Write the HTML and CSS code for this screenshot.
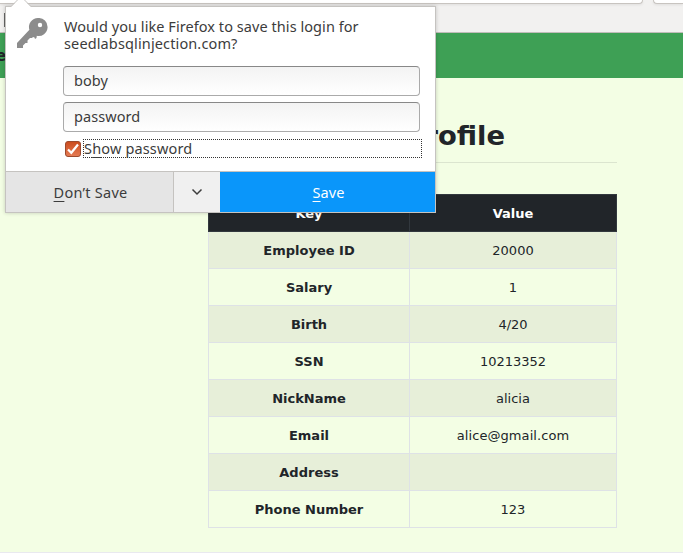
FILE: index.html
```html
<!DOCTYPE html>
<html lang="en">
<head>
<meta charset="utf-8">
<title>Alice Profile</title>
<link rel="stylesheet" href="styles.css">
</head>
<body>
<div class="toolbar"><div class="field field-main"></div><div class="field field-side"></div><i class="edge"></i></div>
<nav class="navbar"><span class="nav-text">e</span></nav>
<main class="profile">
  <h1>Alice Profile</h1>
  <hr>
  <table>
    <thead><tr><th>Key</th><th>Value</th></tr></thead>
    <tbody>
      <tr><th>Employee ID</th><td>20000</td></tr>
      <tr><th>Salary</th><td>1</td></tr>
      <tr><th>Birth</th><td>4/20</td></tr>
      <tr><th>SSN</th><td>10213352</td></tr>
      <tr><th>NickName</th><td>alicia</td></tr>
      <tr><th>Email</th><td class="email">alice@gmail.com</td></tr>
      <tr><th>Address</th><td></td></tr>
      <tr><th>Phone Number</th><td>123</td></tr>
    </tbody>
  </table>
</main>
<footer></footer>
<section class="popup">
  <svg class="arrow" width="20" height="10" viewBox="0 0 20 10"><path d="M0 8 L10 -2 L20 8 V10 H0Z" fill="#fff"/><path d="M0 7.5 L10 -2.5 L20 7.5" fill="none" stroke="#c5c3c0"/></svg>
  <div class="content">
    <svg class="key" width="32" height="32" viewBox="0 0 32 32"><path fill="#8c8c8c" fill-rule="evenodd" d="M21 0a9 9 0 0 0-8.600 11.800L0 25v5h6v-2.500l2.500-2.500h2v-2.500l2.500-2.500h2l1-1 1.500.5.5 1.500 1.500-1 .3-2.200A9 9 0 1 0 21 0ZM23 4.800a2.200 2.200 0 1 1 0 4.400 2.200 2.200 0 0 1 0-4.400Z"/></svg>
    <div class="form">
      <p class="message"><span class="line1">Would you like Firefox to save this login for</span><br><span class="line2">seedlabsqlinjection.com?</span></p>
      <div class="input">boby</div>
      <div class="input">password</div>
      <div class="check">
        <svg width="16" height="16" viewBox="0 0 16 16"><defs><linearGradient id="orange" x1="0" y1="0" x2="0" y2="1"><stop stop-color="#cb4b1c"/><stop offset="1" stop-color="#e57c55"/></linearGradient></defs><rect x=".5" y=".5" width="15" height="15" rx="2.500" fill="url(#orange)" stroke="#9c4a2e"/><path d="M3 8.500 6.300 11.800 13 3.500" fill="none" stroke="#fff" stroke-width="2.200"/></svg>
        <span class="check-label">S<u>h</u>ow password</span>
      </div>
    </div>
  </div>
  <div class="buttons">
    <div class="button dismiss"><span><u>D</u>on’t Save</span></div>
    <div class="button more"><svg width="12" height="8" viewBox="0 0 12 8"><path d="M1.500 1.500 6 6l4.500-4.500" fill="none" stroke="#3d3d3d" stroke-width="1.500"/></svg></div>
    <div class="button save"><span><u>S</u>ave</span></div>
  </div>
</section>
</body>
</html>
```
FILE: styles.css
```css
* { box-sizing: border-box; }
body {
  margin: 0;
  height: 553px;
  overflow: hidden;
  position: relative;
  display: flex;
  flex-direction: column;
  background: #f3fee4;
  color: #212529;
  font: 13px/20px "DejaVu Sans", sans-serif;
}
.toolbar {
  position: relative;
  height: 33px;
  flex: none;
  display: flex;
  gap: 10px;
  background: #f2f1f0;
  border-bottom: 1px solid #c0bdba;
}
.field {
  height: 4px;
  background: #fff;
  border: 1px solid #c8c4c0;
  border-top: 0;
  box-shadow: 0 1px 3px rgba(0, 0, 0, .08);
}
.field-main { width: 643px; border-left: 0; border-radius: 0 0 4px 0; }
.field-side { flex: 1; border-right: 0; border-radius: 0 0 0 4px; }
.edge { position: absolute; left: 4px; top: 13px; width: 1px; height: 14px; background: #666; }
.navbar { height: 45px; flex: none; background: #3ea055; padding: 13px 0; }
.nav-text { margin-left: -4px; font-size: 15px; font-weight: bold; }
.profile { width: 409px; margin-left: 208px; padding-top: 39px; flex: 1; }
h1 {
  margin: 0;
  font-size: 27.4px;
  line-height: 38px;
  font-weight: bold;
  text-align: center;
}
hr { margin: 7px 0 31px; border: 0; border-top: 1px solid #dbe5cf; }
table { width: 409px; table-layout: fixed; border-collapse: collapse; text-align: center; }
tr { height: 37px; }
th, td { padding: 0; border: 1px solid #dee2e6; }
th:first-child { width: 201px; }
thead th { color: #fff; background: #212529; border-color: #32383e; padding-top: 1px; }
tbody th, tbody td { padding-top: 2px; }
td.email { letter-spacing: .08px; }
tbody tr:nth-child(odd) { background: #e7efd9; }
footer { height: 1px; background: #e9e9ef; }
.popup {
  position: absolute;
  left: 5px;
  top: 6px;
  width: 431px;
  height: 207px;
  display: flex;
  flex-direction: column;
  background: #fff;
  border: 1px solid #c5c3c0;
  box-shadow: 0 0 4px rgba(0, 0, 0, .2);
  color: #3c3c3c;
  font: 14.5px/17px "Noto Sans", sans-serif;
  letter-spacing: .06px;
}
.arrow { position: absolute; left: 5px; top: -8px; }
.content { flex: 1; display: flex; padding: 11px 13px 0 11px; }
.key { flex: none; margin-right: 14px; }
.form { flex: 1; }
.message { margin: 0 0 14px 1px; white-space: nowrap; }
.line2 { letter-spacing: .13px; }
.input {
  width: 357px;
  height: 30px;
  margin-bottom: 6px;
  padding: 5px 10px;
  border: 1px solid #aaa;
  border-top-color: #888;
  border-radius: 4px;
  background: linear-gradient(#f3f3f3, #fff);
}
.check { display: flex; align-items: center; gap: 2px; margin: 7px 0 0 2px; height: 19px; }
.check svg { flex: none; }
.check-label { width: 339px; height: 19px; border: 1px dotted #333; line-height: 17px; letter-spacing: .16px; }
.buttons { height: 41px; display: flex; border-top: 1px solid #c5c3c0; }
.button { display: flex; align-items: center; justify-content: center; }
.dismiss { width: 168px; background: #e5e5e5; border-right: 1px solid #c5c3c0; padding-left: 2px; letter-spacing: .25px; }
.more { width: 46px; background: #f0f0f0; }
.save { flex: 1; background: #0a96fa; color: #fff; padding-left: 2px; }
u { text-underline-offset: 3px; text-decoration-thickness: 1px; text-decoration-skip-ink: none; }
```
